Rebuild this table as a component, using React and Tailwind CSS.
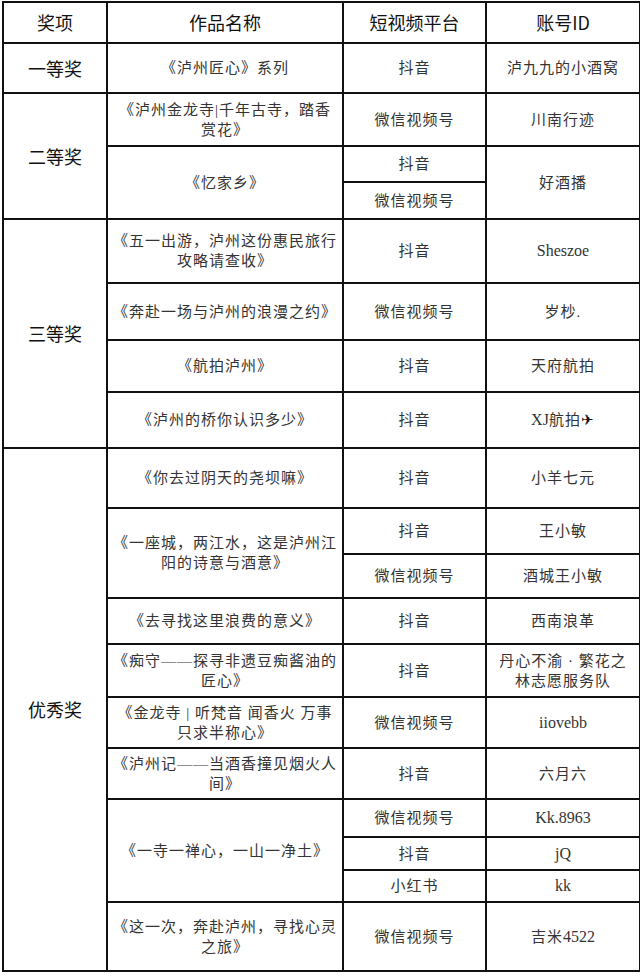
import React from "react";

const body = {
  fontFamily: '"Liberation Serif", "Noto Sans CJK SC", serif',
};
const head = {
  fontFamily: '"Noto Sans CJK SC", "Liberation Sans", sans-serif',
};

const cell = "border-2 border-[#111] px-1 text-center align-middle text-[15px] leading-[20px] tracking-[1px] text-[#333]";
const award = "border-2 border-[#111] text-center align-middle text-[18px] text-[#111]";

// latin text in the reference is plain serif, no extra spacing
const Latin = ({ children }) => (
  <span className="text-[16px] tracking-normal">{children}</span>
);

const App = () => {
  return (
    <div className="min-h-screen w-[640px] bg-white pt-px pl-[2px]">
      <table className="w-[637px] table-fixed border-collapse" style={body}>
        <colgroup>
          <col className="w-[104px]" />
          <col className="w-[236px]" />
          <col className="w-[143px]" />
          <col className="w-[154px]" />
        </colgroup>
        <tbody>
          <tr className="h-[41px]" style={head}>
            <td className={award}>奖项</td>
            <td className={award}>作品名称</td>
            <td className={award}>短视频平台</td>
            <td className={award}>账号ID</td>
          </tr>

          {/* 一等奖 */}
          <tr className="h-[50px]">
            <td className={award} style={head}>一等奖</td>
            <td className={cell}>《泸州匠心》系列</td>
            <td className={cell}>抖音</td>
            <td className={cell}>泸九九的小酒窝</td>
          </tr>

          {/* 二等奖 */}
          <tr className="h-[53px]">
            <td className={award} style={head} rowSpan={3}>二等奖</td>
            <td className={cell}>《泸州金龙寺|千年古寺，踏香赏花》</td>
            <td className={cell}>微信视频号</td>
            <td className={cell}>川南行迹</td>
          </tr>
          <tr className="h-[36px]">
            <td className={cell} rowSpan={2}>《忆家乡》</td>
            <td className={cell}>抖音</td>
            <td className={cell} rowSpan={2}>好酒播</td>
          </tr>
          <tr className="h-[37px]">
            <td className={cell}>微信视频号</td>
          </tr>

          {/* 三等奖 */}
          <tr className="h-[64px]">
            <td className={award} style={head} rowSpan={4}>三等奖</td>
            <td className={cell}>《五一出游，泸州这份惠民旅行攻略请查收》</td>
            <td className={cell}>抖音</td>
            <td className={cell}><Latin>Sheszoe</Latin></td>
          </tr>
          <tr className="h-[57px]">
            <td className={cell}>《奔赴一场与泸州的浪漫之约》</td>
            <td className={cell}>微信视频号</td>
            <td className={cell}>岁杪.</td>
          </tr>
          <tr className="h-[52px]">
            <td className={cell}>《航拍泸州》</td>
            <td className={cell}>抖音</td>
            <td className={cell}>天府航拍</td>
          </tr>
          <tr className="h-[56px]">
            <td className={cell}>《泸州的桥你认识多少》</td>
            <td className={cell}>抖音</td>
            <td className={cell}><Latin>XJ</Latin>航拍<span className="text-[#111]">✈</span></td>
          </tr>

          {/* 优秀奖 */}
          <tr className="h-[60px]">
            <td className={award} style={head} rowSpan={11}>优秀奖</td>
            <td className={cell}>《你去过阴天的尧坝嘛》</td>
            <td className={cell}>抖音</td>
            <td className={cell}>小羊七元</td>
          </tr>
          <tr className="h-[46px]">
            <td className={cell} rowSpan={2}>《一座城，两江水，这是泸州江阳的诗意与酒意》</td>
            <td className={cell}>抖音</td>
            <td className={cell}>王小敏</td>
          </tr>
          <tr className="h-[44px]">
            <td className={cell}>微信视频号</td>
            <td className={cell}>酒城王小敏</td>
          </tr>
          <tr className="h-[46px]">
            <td className={cell}>《去寻找这里浪费的意义》</td>
            <td className={cell}>抖音</td>
            <td className={cell}>西南浪革</td>
          </tr>
          <tr className="h-[53px]">
            <td className={cell}>《痴守——探寻非遗豆痴酱油的匠心》</td>
            <td className={cell}>抖音</td>
            <td className="border-2 border-[#111] px-[8px] text-center align-middle text-[15px] leading-[20px] tracking-[1px] text-[#333]">
              丹心不渝 · 繁花之林志愿服务队
            </td>
          </tr>
          <tr className="h-[51px]">
            <td className={cell}>《金龙寺 | 听梵音 闻香火 万事只求半称心》</td>
            <td className={cell}>微信视频号</td>
            <td className={cell}><Latin>iiovebb</Latin></td>
          </tr>
          <tr className="h-[51px]">
            <td className={cell}>《泸州记——当酒香撞见烟火人间》</td>
            <td className={cell}>抖音</td>
            <td className={cell}>六月六</td>
          </tr>
          <tr className="h-[38px]">
            <td className={cell} rowSpan={3}>《一寺一禅心，一山一净土》</td>
            <td className={cell}>微信视频号</td>
            <td className={cell}><Latin>Kk.8963</Latin></td>
          </tr>
          <tr className="h-[33px]">
            <td className={cell}>抖音</td>
            <td className={cell}><Latin>jQ</Latin></td>
          </tr>
          <tr className="h-[32px]">
            <td className={cell}>小红书</td>
            <td className={cell}><Latin>kk</Latin></td>
          </tr>
          <tr className="h-[69px]">
            <td className={cell}>《这一次，奔赴泸州，寻找心灵之旅》</td>
            <td className={cell}>微信视频号</td>
            <td className={cell}>吉米<Latin>4522</Latin></td>
          </tr>
        </tbody>
      </table>
    </div>
  );
};

export default App;
